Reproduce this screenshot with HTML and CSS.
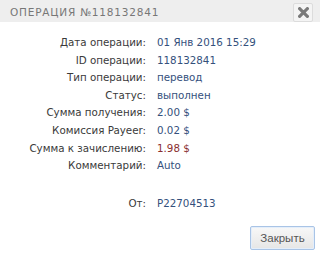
FILE: index.html
```html
<!DOCTYPE html>
<html>
<head>
<meta charset="utf-8">
<link rel="stylesheet" href="styles.css">
</head>
<body>
	<div class="dialog">
		<!--Title bar-->
		<div class="titlebar">
			<span class="title">Операция №118132841</span>
			<button class="close" title="close">
				<svg width="11" height="11" viewBox="0 0 10 10"><path d="M1.5 1.5 L8.5 8.5 M8.5 1.5 L1.5 8.5" stroke="#7a7a7a" stroke-width="2.8" stroke-linecap="square"/></svg>
			</button>
		</div>
		<!--Operation details-->
		<div class="details">
			<span class="label">Дата операции:</span><span class="value">01 Янв 2016 15:29</span>
			<span class="label">ID операции:</span><span class="value">118132841</span>
			<span class="label">Тип операции:</span><span class="value">перевод</span>
			<span class="label">Статус:</span><span class="value">выполнен</span>
			<span class="label">Сумма получения:</span><span class="value">2.00 $</span>
			<span class="label">Комиссия Payeer:</span><span class="value">0.02 $</span>
			<span class="label">Сумма к зачислению:</span><span class="value red">1.98 $</span>
			<span class="label">Комментарий:</span><span class="value">Auto</span>
			<span class="label spacer">От:</span><span class="value spacer">P22704513</span>
		</div>
		<div class="footer">
			<button class="btn">Закрыть</button>
		</div>
	</div>
</body>
</html>
```
FILE: styles.css
```css
body {
    margin: 0;
    background-color: #fff;
    font-family: "DejaVu Sans", sans-serif;
    color: #333;
}
.dialog {
    width: 320px;
    height: 255px;
    display: flex;
    flex-direction: column;
}
.titlebar {
    height: 22px;
    background-color: #eeeeee;
    display: flex;
    align-items: center;
    justify-content: space-between;
    padding: 0 7px 0 10px;
}
.title {
    text-transform: uppercase;
    color: #777;
    font-size: 10.5px;
    letter-spacing: 0.8px;
    padding-top: 1px;
}
.close {
    width: 20px;
    height: 19px;
    margin-top: 3px;
    padding: 0;
    border: 1px solid #dcdcdc;
    border-radius: 2px;
    background-color: #f4f4f4;
    display: flex;
    align-items: center;
    justify-content: center;
}
.details {
    display: grid;
    grid-template-columns: 146px auto;
    column-gap: 11px;
    margin-top: 12px;
    font-size: 10.3px;
    line-height: 17.6px;
}
.label {
    text-align: right;
    color: #3a3a3a;
}
.value {
    color: #34507c;
}
.red {
    color: #8a2f2f;
}
.spacer {
    margin-top: 20px;
}
.footer {
    display: flex;
    justify-content: flex-end;
    padding: 0 5px 0 0;
    margin-top: auto;
    margin-bottom: 5px;
}
.btn {
    width: 65px;
    height: 24px;
    font-family: "Liberation Sans", sans-serif;
    font-size: 11.5px;
    color: #555;
    border: 1px solid #a9c4e6;
    border-radius: 2px;
    background: linear-gradient(#f8f8f8, #e6e6e6);
    box-shadow: inset 0 0 0 1px #e4eefa;
}
```
